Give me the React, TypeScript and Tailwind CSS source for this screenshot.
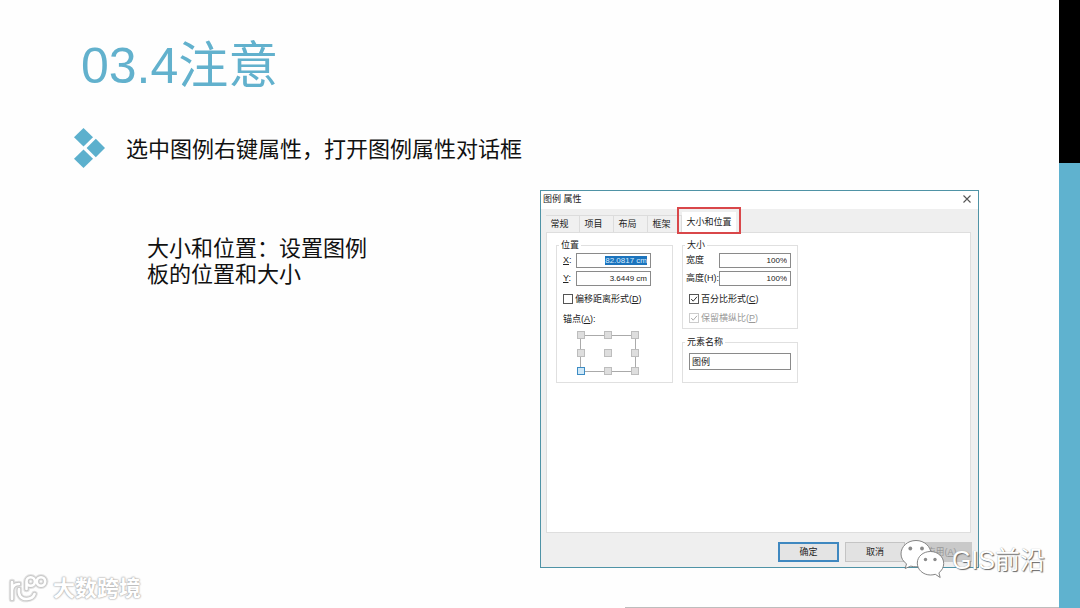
import { useEffect, useRef } from "react";
import type { ReactNode } from "react";

const anchors = [
  "左上", "中上", "右上",
  "左中", "中心", "右中",
  "左下", "中下", "右下",
];

function Group({ title, className, children }: { title: string; className?: string; children: ReactNode }) {
  return (
    <fieldset className={`min-w-0 border border-[#e0e0e0] ${className ?? ""}`}>
      <legend className="ml-[2px] px-[2px] leading-[11px]">{title}</legend>
      {children}
    </fieldset>
  );
}

function DiamondBullet() {
  return (
    <svg className="h-[46px] w-[34px] shrink-0" viewBox="0 0 34 46" fill="#5cb0cd" aria-hidden="true">
      <path d="M10.5 1 20 10.2 10.5 19.4 1 10.2Z" />
      <path d="M22.8 11.8 32 21 22.8 30.2 13.6 21Z" />
      <path d="M10.5 22.6 20 31.8 10.5 41 1 31.8Z" />
    </svg>
  );
}

function WeChatIcon() {
  return (
    <svg className="h-[40px] w-[46px]" viewBox="0 0 46 40" aria-hidden="true">
      <g fill="#fff" stroke="#777" strokeWidth="0.9" strokeLinejoin="round">
        <path d="M16 0.500C7.500 0.500 1 6.500 1 14c0 4 2.200 7.500 5.500 9.800L5.200 28.500l5.600-2.400c1.700.5 3.400.7 5.200.7 8.500 0 15-5.500 15-12.800S24.500.5 16 .5Z" />
        <path d="M30.500 11.500c-7.400 0-13.200 5-13.200 11.600S23.100 35 30.500 35c1.700 0 3.300-.3 4.800-.7l4.900 3.200-1.300-4.700c3-2.200 4.800-5.600 4.800-9.300 0-6.600-5.800-12-13.200-12Z" />
      </g>
      <g fill="#8a8a8a">
        <circle cx="10.300" cy="8.500" r="1.900" />
        <circle cx="22" cy="8.500" r="1.900" />
        <circle cx="25.500" cy="19.500" r="1.700" />
        <circle cx="35" cy="19.500" r="1.700" />
      </g>
    </svg>
  );
}

function SiteLogo() {
  return (
    <svg className="h-[32px] w-[42px]" viewBox="0 0 42 32" fill="none" strokeLinecap="round" aria-hidden="true">
      {["#e2e2e2", "#c8c8c8", "#ffffff"].map((color, i) => (
        <g key={color} stroke={color} strokeWidth={[6.5, 4.5, 2.6][i]}>
          <path d="M4 9v17M4 17c.5-4 3-6 7-6" />
          <path d="M11 16c-1 6 2 10.500 8 10 4-.3 6.500-2 7.500-5" />
          <path d="M18.500 16V8.500a4.200 4.200 0 0 1 8.400 0a4.200 4.200 0 0 1-8.400 0" />
          <circle cx="33" cy="8.500" r="4.200" />
        </g>
      ))}
    </svg>
  );
}

function PropertiesDialog() {
  const xRef = useRef<HTMLInputElement>(null);
  useEffect(() => {
    xRef.current?.focus();
    xRef.current?.select();
  }, []);

  const field = "h-[15px] min-w-0 border border-[#8a8a8a] bg-white px-[3px] text-right text-[8px] outline-none";

  return (
    <section
      role="dialog"
      aria-label="图例 属性"
      className="flex w-[439px] shrink-0 flex-col border border-[#4f93a6] bg-[#efefef] text-[9px] leading-[12px] text-[#222]"
    >
      <header className="flex h-[18px] items-center justify-between bg-white pr-[7px] pb-[2px] pl-[2px]">
        <h2>图例 属性</h2>
        <button type="button" aria-label="关闭">
          <svg className="h-[8px] w-[8px]" viewBox="0 0 8 8" stroke="#555" strokeWidth="1.100" aria-hidden="true">
            <path d="M.5.5l7 7M7.500.5l-7 7" />
          </svg>
        </button>
      </header>

      <div role="tablist" className="flex h-[23px] items-end pl-[5px]">
        {["常规", "项目", "布局", "框架"].map((tab) => (
          <button
            key={tab}
            type="button"
            role="tab"
            aria-selected="false"
            className="h-[17px] w-[34px] border-t border-r border-[#dcdcdc] bg-[#f0f0f0] pr-[6px]"
          >
            {tab}
          </button>
        ))}
        <button type="button" role="tab" aria-selected="true" className="relative h-[20px] w-[54px] bg-white">
          大小和位置
          <span className="absolute -top-[5px] -left-[5px] h-[27px] w-[64px] border-2 border-[#d9474a]" />
        </button>
      </div>

      <div className="mr-[7px] ml-[5px] flex h-[301px] items-start gap-[9px] border border-[#dedede] bg-white px-[9px] pt-[7px]">
        <Group title="位置" className="h-[143px] w-[117px]">
          <div className="flex flex-col px-[6px]">
            <div className="flex h-[18px] items-center">
              <label htmlFor="pos-x" className="w-[13px]"><u>X</u>:</label>
              <input
                id="pos-x"
                ref={xRef}
                defaultValue="82.0817 cm"
                className={`w-[75px] ${field} border-[#4a9bd5] selection:bg-[#1c74bd] selection:text-[#d6ecff]`}
              />
            </div>
            <div className="flex h-[18px] items-center">
              <label htmlFor="pos-y" className="w-[13px]"><u>Y</u>:</label>
              <input id="pos-y" defaultValue="3.6449 cm" className={`w-[75px] ${field}`} />
            </div>
            <label className="flex h-[24px] items-center gap-[2px]">
              <input type="checkbox" className="h-[10px] w-[10px] appearance-none border border-[#555] bg-white" />
              <span>偏移距离形式(<u>D</u>)</span>
            </label>
            <span className="flex h-[16px] items-center"><span>锚点(<u>A</u>):</span></span>
            <div className="relative mt-[4px] ml-[14px] w-[62px]">
              <span className="absolute top-[4px] left-[3px] h-[37px] w-[56px] border border-[#aaa]" />
              <div className="relative grid grid-cols-3 justify-items-center gap-y-[10px]">
                {anchors.map((name) => (
                  <input
                    key={name}
                    type="radio"
                    name="anchor"
                    aria-label={name}
                    defaultChecked={name === "左下"}
                    className="h-[8px] w-[8px] appearance-none border border-[#bdbdbd] bg-[#dedede] checked:border-[#3d8cc4] checked:bg-[#cfe8f8] [&:nth-child(3n)]:justify-self-end [&:nth-child(3n+1)]:justify-self-start"
                  />
                ))}
              </div>
            </div>
          </div>
        </Group>

        <div className="flex w-[116px] flex-col gap-[8px]">
          <Group title="大小" className="h-[89px]">
            <div className="flex flex-col pr-[6px] pl-[3px]">
              <div className="flex h-[18px] items-center">
                <label htmlFor="size-w" className="w-[33px] shrink-0">宽度</label>
                <input id="size-w" defaultValue="100%" className={`flex-1 ${field}`} />
              </div>
              <div className="flex h-[18px] items-center">
                <label htmlFor="size-h" className="w-[33px] shrink-0 whitespace-nowrap">高度(H):</label>
                <input id="size-h" defaultValue="100%" className={`flex-1 ${field}`} />
              </div>
              <label className="flex h-[24px] items-center gap-[2px] pl-[3px]">
                <span className="grid">
                  <input type="checkbox" defaultChecked className="col-start-1 row-start-1 h-[10px] w-[10px] appearance-none border border-[#555] bg-white" />
                  <svg className="pointer-events-none col-start-1 row-start-1 h-[10px] w-[10px]" viewBox="0 0 10 10" fill="none" stroke="#333" aria-hidden="true">
                    <path d="M2.200 5l2 2.200L8 2.800" />
                  </svg>
                </span>
                <span>百分比形式(<u>C</u>)</span>
              </label>
              <label className="flex h-[14px] items-center gap-[2px] pl-[3px] text-[#999]">
                <span className="grid">
                  <input type="checkbox" defaultChecked disabled className="col-start-1 row-start-1 h-[10px] w-[10px] appearance-none border border-[#ccc] bg-white" />
                  <svg className="pointer-events-none col-start-1 row-start-1 h-[10px] w-[10px]" viewBox="0 0 10 10" fill="none" stroke="#aaa" aria-hidden="true">
                    <path d="M2.200 5l2 2.200L8 2.800" />
                  </svg>
                </span>
                <span>保留横纵比(<u>P</u>)</span>
              </label>
            </div>
          </Group>
          <Group title="元素名称" className="h-[46px]">
            <div className="flex pt-[5px] pr-[6px] pl-[6px]">
              <input
                aria-label="元素名称"
                defaultValue="图例"
                className="h-[17px] min-w-0 flex-1 border border-[#8a8a8a] bg-white px-[2px] outline-none"
              />
            </div>
          </Group>
        </div>
      </div>

      <footer className="flex h-[34px] items-center justify-end gap-[6px] pt-[3px] pr-[6px]">
        <button type="button" className="h-[20px] w-[61px] border-2 border-[#3f88c0] bg-[#e4e4e4]">确定</button>
        <button type="button" className="h-[20px] w-[60px] border border-[#c4c4c4] bg-[#e2e2e2]">取消</button>
        <button type="button" disabled className="h-[20px] w-[61px] bg-[#c9c9c9] text-[#999]">应用(<u>A</u>)</button>
      </footer>
    </section>
  );
}

export default function App() {
  return (
    <div className="relative flex min-h-screen bg-[#fefefe] font-['Liberation_Sans','Noto_Sans_CJK_SC',sans-serif] text-[#111]">
      <main className="flex min-w-0 flex-1 flex-col">
        <h1 className="mt-[36px] ml-[81px] text-[50px] leading-[60px] text-[#62b1cd]">03.4注意</h1>
        <div className="mt-[31px] ml-[73px] flex h-[46px] items-center gap-[19px]">
          <DiamondBullet />
          <p className="text-[22px] leading-[26px]">选中图例右键属性，打开图例属性对话框</p>
        </div>
        <div className="mt-[17px] mr-[80px] ml-[147px] flex items-start justify-between">
          <p className="mt-[46px] w-[230px] text-[22px] leading-[26px]">大小和位置：设置图例板的位置和大小</p>
          <PropertiesDialog />
        </div>
        <div className="mt-auto h-px w-[41%] self-end bg-[#bdbdbd]" />
      </main>

      <aside className="flex w-[21px] shrink-0 flex-col bg-[#5fb2cf]">
        <div className="h-[163px] bg-black" />
      </aside>

      <div className="absolute right-[35px] bottom-[28px] flex items-center gap-[6px]">
        <WeChatIcon />
        <span className="text-[25px] leading-[40px] text-white [text-shadow:1px_1px_1px_#666,0_0_1px_#999]">GIS前沿</span>
      </div>
      <div className="absolute bottom-[3px] left-[8px] flex items-center gap-[3px]">
        <SiteLogo />
        <span className="text-[22px] leading-[32px] font-bold text-white [text-shadow:0_0_2px_#aaa,0_0_2px_#bbb,0_0_1px_#bbb]">大数跨境</span>
      </div>
    </div>
  );
}
